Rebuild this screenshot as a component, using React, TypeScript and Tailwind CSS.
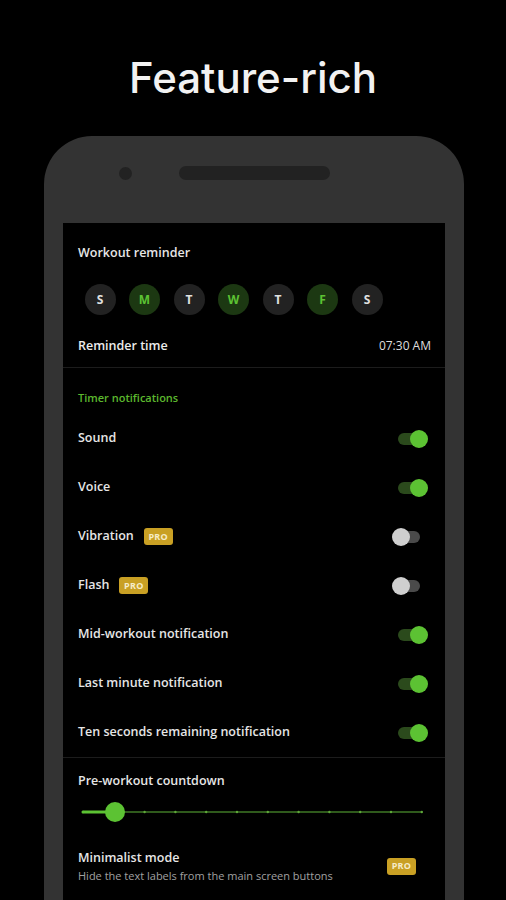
import React from "react";

const font = { fontFamily: '"Open Sans", "Noto Sans", sans-serif' };

function Toggle({ on }: { on: boolean }) {
  return (
    <div className="relative w-[36px] h-[18px] shrink-0">
      <div
        className={`absolute left-[6px] right-[8px] top-[3px] h-[12px] rounded-full ${
          on ? "bg-[#2b4a1c]" : "bg-[#4a4a4a]"
        }`}
      />
      <div
        className={`absolute top-0 w-[18px] h-[18px] rounded-full ${
          on ? "right-0 bg-[#5cc233]" : "left-0 bg-[#cfcfcf]"
        }`}
      />
    </div>
  );
}

function Pro() {
  return (
    <span className="inline-flex items-center justify-center w-[29px] h-[17px] rounded-[3px] bg-[#c9a024] text-[9px] font-bold text-[#f6ecc8] tracking-[0.3px]">
      PRO
    </span>
  );
}

function Row({ label, on, pro }: { label: string; on: boolean; pro?: boolean }) {
  return (
    <div className="h-[49px] flex items-center justify-between pr-[17px]">
      <div className="flex items-center gap-[10px]">
        <span className="text-[12.5px] font-semibold text-[#e6e6e6]">{label}</span>
        {pro && <Pro />}
      </div>
      <Toggle on={on} />
    </div>
  );
}

function Slider() {
  const ticks = Array.from({ length: 12 }, (_, i) => 5 + i * 30.8);
  return (
    <svg width="360" height="24" viewBox="0 0 360 24" className="block">
      <line x1="5" y1="12" x2="344" y2="12" stroke="#2f5a1c" strokeWidth="2" />
      {ticks.map((x, i) => (
        <circle key={i} cx={x} cy="12" r="1.2" fill="#5fa83a" />
      ))}
      <line x1="5" y1="12" x2="37" y2="12" stroke="#5cc233" strokeWidth="3" strokeLinecap="round" />
      <circle cx="37" cy="12" r="10" fill="#5cc233" />
    </svg>
  );
}

export default function App() {
  const days = [
    ["S", false],
    ["M", true],
    ["T", false],
    ["W", true],
    ["T", false],
    ["F", true],
    ["S", false],
  ] as const;
  return (
    <div className="w-[506px] h-[900px] bg-black overflow-hidden flex flex-col items-center" style={font}>
      <div
        className="h-[136px] pt-[50px] text-[42px] leading-[56px] text-[#f2f2f2] font-medium"
        style={{ fontFamily: 'Inter, "Noto Sans", sans-serif' }}
      >
        Feature-rich
      </div>
      <div className="w-[420px] ml-[2px] flex-1 bg-[#333333] rounded-t-[48px] px-[19px] flex flex-col">
        <div className="h-[87px] flex items-start pt-[30px]">
          <div className="ml-[56px] mt-[1px] w-[13px] h-[13px] rounded-full bg-[#222222]" />
          <div className="ml-[47px] w-[151px] h-[14px] rounded-full bg-[#222222]" />
        </div>
        <div className="flex-1 bg-black pl-[15px]">
          {/* reminder section */}
          <div className="pt-[20px] pb-[11px] border-b border-[#1c1c1c] -ml-[15px] pl-[15px]">
            <div className="text-[12.5px] leading-[20px] font-semibold text-[#e6e6e6]">Workout reminder</div>
            <div className="mt-[21px] ml-[6.5px] flex gap-[13.5px]">
              {days.map(([d, on], i) => (
                <div
                  key={i}
                  className={`w-[31px] h-[31px] rounded-full flex items-center justify-center text-[12px] font-bold ${
                    on ? "bg-[#1c3812] text-[#5cc233]" : "bg-[#222222] text-[#e0e0e0]"
                  }`}
                >
                  {d}
                </div>
              ))}
            </div>
            <div className="mt-[21px] h-[20px] flex items-center justify-between pr-[14px]">
              <span className="text-[12.5px] font-semibold text-[#ececec]">Reminder time</span>
              <span className="text-[12px] text-[#dddddd]">07:30 AM</span>
            </div>
          </div>
          {/* timer notifications */}
          <div className="border-b border-[#1c1c1c] -ml-[15px] pl-[15px]">
            <div className="pt-[22px] text-[11px] leading-[16px] font-semibold text-[#5cb82e]">Timer notifications</div>
            <div className="mt-[8px]">
              <Row label="Sound" on />
              <Row label="Voice" on />
              <Row label="Vibration" on={false} pro />
              <Row label="Flash" on={false} pro />
              <Row label="Mid-workout notification" on />
              <Row label="Last minute notification" on />
              <Row label="Ten seconds remaining notification" on />
            </div>
          </div>
          {/* pre-workout */}
          <div className="pt-[13px]">
            <div className="text-[12.5px] leading-[20px] font-semibold text-[#e6e6e6]">Pre-workout countdown</div>
            <div className="mt-[9px]">
              <Slider />
            </div>
            <div className="mt-[25px] flex items-center justify-between pr-[29px]">
              <div>
                <div className="text-[12.5px] leading-[18px] font-semibold text-[#e6e6e6]">Minimalist mode</div>
                <div className="mt-[2px] text-[11px] leading-[14px] text-[#a0a0a0]">
                  Hide the text labels from the main screen buttons
                </div>
              </div>
              <Pro />
            </div>
          </div>
        </div>
      </div>
    </div>
  );
}
